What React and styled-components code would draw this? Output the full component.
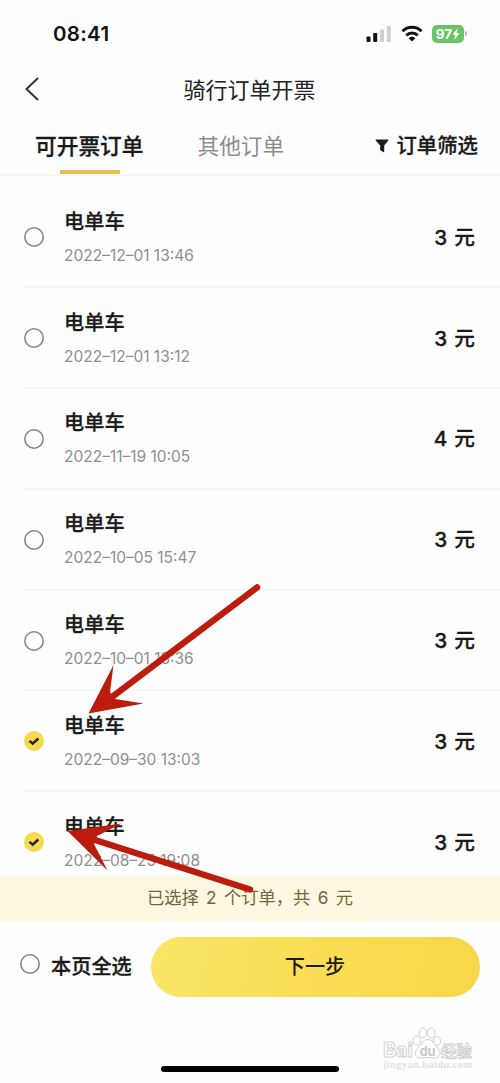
import styled, { createGlobalStyle } from "styled-components"

const GlobalStyle = createGlobalStyle`
  * {
    box-sizing: border-box;
  }
  body {
    margin: 0;
    background: #fefefe;
    font-family: Inter, "Noto Sans CJK SC", sans-serif;
    color: #1a1a1a;
  }
`

const Screen = styled.div`
  position: relative;
  display: flex;
  flex-direction: column;
  width: 500px;
  height: 1083px;
  overflow: hidden;
`

const StatusBar = styled.div`
  display: flex;
  align-items: center;
  justify-content: space-between;
  height: 66px;
  padding: 1px 33px 0 53px;
`

const Clock = styled.span`
  padding-top: 1px;
  font-size: 20.5px;
  font-weight: 600;
  line-height: 24px;
  letter-spacing: 0.3px;
  color: #111;
`

const StatusIcons = styled.div`
  display: flex;
  align-items: center;
`

const Signal = styled.svg`
  width: 26px;
  height: 18px;
  margin-right: 9px;
`

const Wifi = styled.svg`
  width: 22px;
  height: 17px;
  margin-right: 9px;
`

const Battery = styled.div`
  display: flex;
  align-items: center;
  justify-content: center;
  width: 32px;
  height: 18px;
  border-radius: 5px;
  background: #68c467;
  color: #fff;
  font-size: 13.5px;
  font-weight: 700;
  line-height: 18px;
`

const BatteryTip = styled.span`
  width: 2px;
  height: 5px;
  margin-left: 1px;
  border-radius: 0 2px 2px 0;
  background: #b5b5b5;
`

const NavBar = styled.header`
  display: grid;
  grid-template-columns: 60px 1fr 60px;
  align-items: center;
  height: 46px;
`

const BackButton = styled.button`
  display: flex;
  margin: 0;
  padding: 0 0 0 24px;
  border: 0;
  background: none;
`

const Title = styled.h1`
  margin: 0;
  text-align: center;
  font-size: 22px;
  font-weight: 400;
  line-height: 32px;
  padding: 1px 1px 0 0;
  color: #222;
`

const Tabs = styled.nav`
  display: flex;
  height: 64px;
  padding: 0 22px 0 35px;
  border-bottom: 2px solid #f6f6f6;
`

const Tab = styled.div`
  display: flex;
  flex-direction: column;
  align-items: center;
  margin-right: 54px;
  padding-top: 18px;
  font-size: 21.7px;
  line-height: 32px;
  font-weight: ${(p) => (p.$active ? 500 : 400)};
  -webkit-text-stroke: ${(p) => (p.$active ? "0.3px" : "0")};
  color: ${(p) => (p.$active ? "#1a1a1a" : "#8c8c8c")};

  &::after {
    content: "";
    width: 60px;
    height: 4px;
    margin: 8px 0 0 1px;
    background: ${(p) => (p.$active ? "#e8c04f" : "transparent")};
  }
`

const Filter = styled.div`
  display: flex;
  gap: 7px;
  margin-left: auto;
  padding-top: 18px;
  font-size: 20.4px;
  line-height: 32px;
  font-weight: 500;
  -webkit-text-stroke: 0.3px;

  svg {
    margin-top: 9px;
  }
`

const OrderList = styled.main`
  height: 700px;
  padding-top: 11.5px;
  overflow: hidden;
`

const Order = styled.div`
  display: flex;
  align-items: center;
  height: 100.8px;
  margin-left: 24px;
  padding: 1px 25px 0 0;
  border-bottom: 2px solid #f7f7f7;
`

const Radio = styled.span`
  display: flex;
  align-items: center;
  justify-content: center;
  flex: none;
  width: 20px;
  height: 20px;
  border-radius: 50%;
  box-shadow: ${(p) => (p.$checked ? "none" : "inset 0 0 0 1.6px #858585")};
  background: ${(p) => (p.$checked ? "#f5d94e" : "transparent")};
`

const OrderInfo = styled.div`
  flex: 1;
  margin-left: 20px;
`

const OrderName = styled.div`
  font-size: 20.2px;
  font-weight: 500;
  line-height: 30px;
  -webkit-text-stroke: 0.3px;
`

const OrderDate = styled.div`
  margin-top: 7px;
  font-size: 15.5px;
  line-height: 24px;
  color: #8e8e8e;
`

const Price = styled.div`
  padding-top: 1px;
  font-size: 20.7px;
  font-weight: 500;
  line-height: 30px;
  word-spacing: 1.5px;
  -webkit-text-stroke: 0.3px;
`

const Summary = styled.div`
  height: 45px;
  background: #fef8e2;
  color: #74653b;
  text-align: center;
  font-size: 17.3px;
  line-height: 44px;
  word-spacing: 2.5px;
`

const Footer = styled.footer`
  display: flex;
  align-items: center;
  height: 92px;
  padding: 0 20px;
`

const SelectAll = styled.div`
  display: flex;
  align-items: flex-start;
  gap: 11px;
  width: 131px;
  font-size: 20.2px;
  font-weight: 500;
  line-height: 32px;
  -webkit-text-stroke: 0.3px;

  span {
    margin-top: 3px;
  }
`

const NextButton = styled.button`
  flex: 1;
  height: 60px;
  padding: 0 1px 3px 0;
  border: 0;
  border-radius: 30px;
  background: linear-gradient(100deg, #fae566 0%, #f9de55 50%, #f7d746 100%);
  font-family: inherit;
  font-size: 20.2px;
  font-weight: 500;
  color: #1a1a1a;
`

const HomeIndicator = styled.div`
  width: 178px;
  height: 6px;
  margin: auto 0 11px 161px;
  border-radius: 3px;
  background: #000;
`

const Arrows = styled.svg`
  position: absolute;
  left: 0;
  top: 0;
  pointer-events: none;
`

const Watermark = styled.svg`
  position: absolute;
  left: 380px;
  top: 1025px;
  font-family: Inter, "Noto Sans CJK SC", sans-serif;
`

const orders = [
  { date: "2022–12–01 13:46", price: 3 },
  { date: "2022–12–01 13:12", price: 3 },
  { date: "2022–11–19 10:05", price: 4 },
  { date: "2022–10–05 15:47", price: 3 },
  { date: "2022–10–01 13:36", price: 3 },
  { date: "2022–09–30 13:03", price: 3, checked: true },
  { date: "2022–08–25 19:08", price: 3, checked: true },
]

function Status() {
  return (
    <StatusBar>
      <Clock>08:41</Clock>
      <StatusIcons>
        <Signal viewBox="0 0 26 18">
          <rect x="0.5" y="11.5" width="4" height="5.5" rx="1" fill="#111" />
          <rect x="7.2" y="8" width="4" height="9" rx="1" fill="#111" />
          <rect x="14" y="4.5" width="4" height="12.5" rx="1" fill="#d0d0d0" />
          <rect x="20.8" y="1" width="4" height="16" rx="1" fill="#d0d0d0" />
        </Signal>
        <Wifi viewBox="0 0 22 17">
          <g fill="none" stroke="#111" strokeWidth="3">
            <path d="M1.5 6.2a13.6 13.6 0 0 1 19 0" />
            <path d="M5.2 10.3a8.4 8.4 0 0 1 11.6 0" />
          </g>
          <path d="M11 16.6L7.6 13.2a4.9 4.9 0 0 1 6.8 0z" fill="#111" />
        </Wifi>
        <Battery>
          97
          <svg width="8" height="12" viewBox="0 0 8 12">
            <path d="M5.8 0L0.4 6.8h2.9L2.2 12 7.7 4.9H4.7z" fill="#fff" />
          </svg>
        </Battery>
        <BatteryTip />
      </StatusIcons>
    </StatusBar>
  )
}

function OrderRow({ order }) {
  return (
    <Order>
      <Check checked={order.checked} />
      <OrderInfo>
        <OrderName>电单车</OrderName>
        <OrderDate>{order.date}</OrderDate>
      </OrderInfo>
      <Price>{order.price} 元</Price>
    </Order>
  )
}

function Check({ checked }) {
  return (
    <Radio $checked={checked}>
      {checked && (
        <svg width="12" height="10" viewBox="0 0 12 10">
          <path d="M1.5 4.8l3.2 2.900 5.600-5.200" fill="none" stroke="#222" strokeWidth="2.400" />
        </svg>
      )}
    </Radio>
  )
}

export default function App() {
  return (
    <Screen>
      <GlobalStyle />
      <Status />
      <NavBar>
        <BackButton>
          <svg width="16" height="26" viewBox="0 0 16 26">
            <path d="M14 2L2.5 13 14 24" fill="none" stroke="#333" strokeWidth="2" />
          </svg>
        </BackButton>
        <Title>骑行订单开票</Title>
      </NavBar>
      <Tabs>
        <Tab $active>可开票订单</Tab>
        <Tab>其他订单</Tab>
        <Filter>
          <svg width="14" height="14" viewBox="0 0 14 14">
            <path d="M1.2 0.5h11.6q1 0 .5 1L9.200 6.500v7L5.200 11.300V6.500L.700 1.500Q.200 .5 1.200 .5z" fill="#1a1a1a" />
          </svg>
          订单筛选
        </Filter>
      </Tabs>
      <OrderList>
        {orders.map((order) => (
          <OrderRow key={order.date} order={order} />
        ))}
      </OrderList>
      <Summary>已选择 2 个订单，共 6 元</Summary>
      <Footer>
        <SelectAll>
          <Check />
          本页全选
        </SelectAll>
        <NextButton>下一步</NextButton>
      </Footer>
      <HomeIndicator />
      <Arrows width="500" height="1083">
        <g fill="#bb1c0c" stroke="#bb1c0c">
          <path d="M257 587.5L112 697" strokeWidth="6.5" strokeLinecap="round" />
          <path d="M88.5 713.5L113.5 665 110 692 115 699 143.5 703.5z" stroke="none" />
          <path d="M250 889.5L95 840" strokeWidth="6.5" strokeLinecap="round" />
          <path d="M67.500 831L121.500 823.500 97 836 94 844 107.500 870.500z" stroke="none" />
        </g>
      </Arrows>
      <Watermark width="100" height="50">
        <g fill="#fff" stroke="#d2d2d2" strokeWidth="1">
          <text x="3" y="32" fontSize="20" fontWeight="700" textLength="30">Bai</text>
          <ellipse cx="36.700" cy="15.500" rx="3.500" ry="4.500" />
          <ellipse cx="43" cy="8" rx="3.800" ry="5" />
          <ellipse cx="51.300" cy="8" rx="3.800" ry="5" />
          <ellipse cx="57" cy="16" rx="3.500" ry="4.500" />
          <path d="M47.500 14.500c5 0 7 5 10 8 5 5 2 10.500-3 10.500-5-.8-9-.8-14 0-5 0-7-5-3-9.500 4-3.500 5-9 10-9z" />
        </g>
        <text x="39.500" y="31" fontSize="13" fontWeight="700" fill="#c9c9c9" textLength="16">du</text>
        <g fill="#fff" stroke="#cacaca" strokeWidth="0.800">
          <text x="61" y="31.500" fontSize="15.500" fontWeight="700" textLength="31">经验</text>
        </g>
        <text
          x="3"
          y="43"
          fontSize="10.500"
          fontWeight="700"
          fontFamily="Liberation Serif, serif"
          fill="#e2e2e2"
          textLength="89"
        >
          jingyan.baidu.com
        </text>
      </Watermark>
    </Screen>
  )
}
